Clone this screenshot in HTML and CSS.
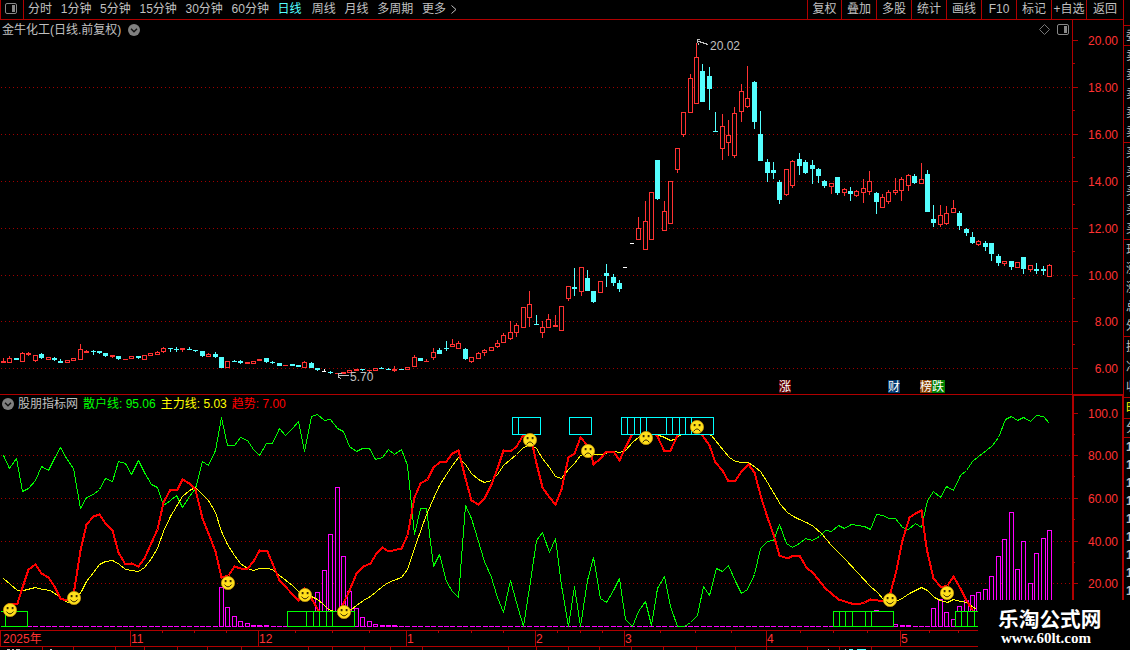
FILE: index.html
```html
<!doctype html>
<html lang="zh">
  <head>
    <meta charset="utf-8">
    <title>金牛化工</title>
    <link rel="stylesheet" href="styles.css">
  </head>
  <body>
    <div class="screen">
      <div class="main">
        <div class="toolbar">
          <div class="layout-btn">
            <svg width="12" height="11" viewBox="0 0 12 11"><rect x=".5" y=".5" width="11" height="10" rx="1.5" fill="none" stroke="#888"/><rect x="7" y="2" width="3" height="7" fill="#888"/></svg>
          </div>
          <div class="periods">
            <span>分时</span><span>1分钟</span><span>5分钟</span><span>15分钟</span><span>30分钟</span><span>60分钟</span><span class="active">日线</span><span>周线</span><span>月线</span><span>多周期</span><span class="more">更多<svg width="6" height="9" viewBox="0 0 6 9"><path d="M.5 .5L5 4.5L.5 8.5" fill="none" stroke="#c0c0c0"/></svg></span>
          </div>
          <div class="tools">
            <span>复权</span><span>叠加</span><span>多股</span><span>统计</span><span>画线</span><span>F10</span><span>标记</span><span>+自选</span><span>返回</span>
          </div>
        </div>

        <div class="panel price">
          <svg id="price" class="chart" width="1123" height="375" viewBox="0 20 1123 375"></svg>
          <div class="caption">
            <span>金牛化工(日线.前复权)</span>
            <svg class="fold" width="12" height="12" viewBox="0 0 12 12"><circle cx="6" cy="6" r="6" fill="#808080"/><path d="M3 4.8L6 7.8L9 4.8" fill="none" stroke="#111" stroke-width="1.4"/></svg>
            <div class="caption-right">
              <svg width="11" height="11" viewBox="0 0 11 11"><path d="M5.5 .5L10.5 5.5L5.5 10.5L.5 5.5Z" fill="none" stroke="#777"/></svg>
              <svg width="12" height="11" viewBox="0 0 12 11"><rect x=".5" y=".5" width="11" height="10" rx="1.5" fill="none" stroke="#888"/><rect x="7" y="2" width="3" height="7" fill="#888"/></svg>
            </div>
          </div>
        </div>

        <div class="panel indicator">
          <svg id="indicator" class="chart" width="1123" height="235" viewBox="0 395 1123 235"></svg>
          <div class="legend">
            <svg class="fold" width="12" height="12" viewBox="0 0 12 12"><circle cx="6" cy="6" r="6" fill="#808080"/><path d="M3 4.8L6 7.8L9 4.8" fill="none" stroke="#111" stroke-width="1.4"/></svg>
            <span class="name">股朋指标网</span>
            <span class="retail">散户线: 95.06</span>
            <span class="major">主力线: 5.03</span>
            <span class="trend">趋势: 7.00</span>
          </div>
        </div>

        <svg id="timeline" class="chart" width="1123" height="20" viewBox="0 630 1123 20"></svg>
      </div>

      <div class="quotes">
        <div class="block b0"></div>
        <div class="block b1"><i>委</i></div>
        <div class="block b2"><i>卖</i><i>卖</i><i>卖</i><i>卖</i><i>卖</i></div>
        <div class="block b2"><i>买</i><i>买</i><i>买</i><i>买</i><i>买</i></div>
        <div class="block b2"><i>现</i><i>涨</i><i>涨</i><i>总</i><i>外</i></div>
        <div class="block b3"><i>换</i><i>净</i><i>收</i></div>
        <div class="block b4 hot"><i>时</i></div>
        <div class="block b5"><i>分</i></div>
        <div class="block b6"><i>1</i><i>1</i><i>1</i><i>1</i><i>1</i><i>1</i><i>1</i><i>1</i><i>1</i></div>
      </div>

      <div class="watermark">
        <div class="site">乐淘公式网</div>
        <div class="url">www.60lt.com</div>
      </div>
    </div>
    <script src="chart.js"></script>
  </body>
</html>
```
FILE: styles.css
```css
* {
  box-sizing: border-box;
}
body {
  margin: 0;
  background: #000;
  color: #c0c0c0;
  font: 12px/14px "Liberation Sans", "Noto Sans CJK SC", sans-serif;
}
.screen {
  position: relative;
  display: flex;
  width: 1130px;
  height: 650px;
  overflow: hidden;
}
.main {
  display: flex;
  flex-direction: column;
  width: 1123px;
  flex: none;
}

/* toolbar */
.toolbar {
  display: flex;
  height: 20px;
  border-bottom: 1px solid #b00000;
  line-height: 19px;
  white-space: nowrap;
}
.layout-btn {
  display: flex;
  width: 24px;
  padding: 3px 0 0 4px;
  border-left: 1px solid #b00000;
  border-right: 1px solid #b00000;
}
.periods {
  display: flex;
  flex: 1;
  gap: 8.7px;
  padding-left: 4px;
}
.active {
  margin-right: 1.5px;
  color: #54ffff;
}
.more {
  display: flex;
  align-items: center;
  gap: 5px;
}
.tools {
  display: flex;
}
.tools span {
  width: 35px;
  border-left: 1px solid #b00000;
  text-align: center;
}
.tools span:first-child {
  width: 34px;
}
.tools span:last-child {
  width: 37px;
}

/* panels: the caption shares the grid cell with its chart */
.panel {
  display: grid;
  align-items: start;
}
.panel > * {
  grid-area: 1 / 1;
}
.chart {
  display: block;
  shape-rendering: crispEdges;
}
.chart text {
  font-size: 12px;
  fill: #ff3232;
}
.chart .note {
  fill: #c0c0c0;
}
.chart .tag {
  fill: #fff;
}
.caption {
  display: flex;
  align-items: center;
  width: 1072px;
  height: 19px;
  padding: 0 3px 0 2px;
}
.caption .fold {
  margin-left: 7px;
}
.caption-right {
  display: flex;
  gap: 7px;
  margin-left: auto;
}
.legend {
  display: flex;
  align-items: center;
  height: 17px;
  padding-left: 2px;
}
.name {
  margin: 0 5px 0 4px;
}
.retail {
  color: #0f0;
  margin-right: 5px;
}
.major {
  color: #ff0;
  margin-right: 5px;
}
.trend {
  color: #f00;
}

/* quote list, cut by the window edge */
.quotes {
  width: 7px;
  height: 600px;
  overflow: hidden;
  border-left: 1px solid #b00000;
}
.block {
  display: flex;
  flex-direction: column;
  justify-content: space-around;
  overflow: hidden;
  padding-left: 2px;
  border-bottom: 1px solid #b00000;
}
.block i {
  width: 14px;
  font-style: normal;
}
.b0 { height: 26px; }
.b1 { height: 20px; }
.b2 { height: 97px; }
.b3 { height: 61px; }
.b4 { height: 21px; }
.b5 { height: 19px; }
.b6 {
  height: 162px;
  border: 0;
  font-weight: bold;
}
.hot {
  color: #ff0;
}

.watermark {
  position: absolute;
  left: 978px;
  top: 600px;
  width: 152px;
  height: 50px;
  padding: 7px 0 0 20px;
  background: #000;
  color: #fff;
}
.site {
  font: bold 20.7px/23px "Noto Sans CJK SC", sans-serif;
}
.url {
  padding-left: 3px;
  font: bold 15px/17px "Liberation Serif", serif;
}
```
FILE: chart.js
```js
var NS = 'http://www.w3.org/2000/svg';
var RED = '#ff3232', CYAN = '#54ffff', LINE = '#b00000', DOT = '#a00000';

function add(svg, name, attrs, text) {
  var el = document.createElementNS(NS, name);
  for (var k in attrs) el.setAttribute(k, attrs[k]);
  if (text) el.textContent = text;
  svg.appendChild(el);
  return el;
}
function block(svg, x, y, w, h, fill) {
  add(svg, 'rect', { x: x, y: y, width: w, height: h, fill: fill });
}
function frame(svg, x, y, w, h, stroke) {
  add(svg, 'rect', { x: x + 0.5, y: y + 0.5, width: w - 1, height: h - 1, fill: '#000', stroke: stroke });
}
function label(svg, x, y, text, cls, anchor) {
  add(svg, 'text', { x: x, y: y, 'class': cls || '', 'text-anchor': anchor || 'start' }, text);
}
function grid(svg, y) {
  add(svg, 'path', { d: 'M1 ' + (y + 0.5) + 'H1072', stroke: DOT, 'stroke-dasharray': '1 3' });
}
function curve(svg, points, color, width) {
  add(svg, 'polyline', { points: points, fill: 'none', stroke: color, 'stroke-width': width,
    'stroke-linejoin': 'round', transform: 'translate(.5 .5)' });
}

// ---- price ----
// x, high, body top, body bottom, low, kind (r up, c down, w flat)
var candles = `3 358 361 363 363 r|9 356 358 363 363 r|16 358 358 360 360 c|22 352 353 362 362 r|28 352 353 355 356 r|35 355 355 361 362 r
41 353 354 358 359 c|48 357 357 360 360 r|54 357 358 360 361 c|60 359 361 363 363 c|67 360 360 363 363 r|73 358 358 361 361 r
80 344 349 360 360 r|86 350 351 353 353 r|93 350 351 352 355 c|99 351 351 353 354 c|105 353 353 356 357 c|112 355 355 357 358 r
118 356 356 359 360 c|125 359 359 360 360 r|131 356 356 359 359 r|138 356 356 358 359 c|144 355 355 360 360 r|150 353 353 356 356 r
157 351 352 355 355 r|163 347 348 352 353 r|170 348 348 349 352 c|176 347 349 350 352 c|182 348 348 350 352 r|189 347 349 350 350 c
195 350 350 351 352 c|202 351 351 356 357 c|208 353 354 357 357 r|215 352 354 357 358 c|221 357 357 368 368 c|227 361 361 368 368 r
234 360 361 362 362 c|240 360 361 363 364 c|247 362 362 364 364 r|253 361 361 364 364 r|259 359 359 361 361 r|266 358 358 362 363 c
272 361 362 363 364 c|279 363 363 366 366 c|285 365 365 366 366 r|292 364 364 366 366 c|298 365 365 367 367 c|304 361 362 368 368 r
311 362 363 368 368 c|317 368 368 370 371 c|324 369 371 372 372 w|330 371 372 373 374 c|337 373 373 374 374 r|343 372 372 374 374 r
349 370 370 373 373 r|356 369 369 371 371 r|362 369 369 370 371 c|369 370 370 371 373 r|375 368 368 371 371 r|381 367 368 369 369 c
388 368 369 370 370 c|394 366 369 371 372 r|401 369 369 370 370 c|407 367 367 370 370 r|414 355 357 367 367 r|420 358 358 361 361 c
426 359 361 362 362 r|433 348 352 358 360 r|439 348 350 354 354 c|446 341 348 349 351 c|452 339 344 347 347 r|458 341 343 349 349 r
465 348 349 359 360 c|471 357 357 362 363 r|478 352 353 359 359 r|484 349 350 353 356 r|491 347 347 351 351 r|497 340 343 347 348 r
503 333 335 343 343 r|510 321 332 339 340 r|516 323 325 333 337 r|523 307 307 328 328 r|529 291 304 318 327 r|536 315 324 325 325 c
542 321 327 333 338 r|548 314 319 328 328 r|555 315 325 327 327 r|561 306 306 331 331 r|568 286 286 299 301 r|574 268 287 289 296 c
581 267 267 292 296 r|587 270 278 291 291 c|593 291 291 302 303 c|600 281 281 293 293 r|606 264 273 276 287 c|613 274 277 283 286 c
619 280 283 289 292 c|625 267 267 268 268 w|632 243 243 244 244 w|638 217 228 240 240 r|645 201 221 250 250 r|651 192 192 240 240 r
657 160 160 199 200 c|664 201 211 231 231 r|670 181 181 224 224 r|677 148 148 170 173 r|683 112 112 135 137 r|690 74 78 113 113 r
696 43 57 104 104 r|702 64 71 102 102 c|709 67 76 89 110 c|715 112 131 132 132 c|722 114 126 149 160 r|728 120 135 143 156 r
734 107 113 156 158 r|741 84 91 112 122 r|747 66 98 107 108 r|754 81 82 122 129 c|760 111 134 161 161 c|767 159 162 173 182 c
773 162 170 173 179 c|779 180 182 200 204 c|786 169 169 195 196 r|792 160 161 186 188 r|799 153 159 166 175 c|805 160 162 173 174 c
812 160 165 169 184 c|818 168 169 176 183 c|824 180 181 186 188 c|831 183 183 187 194 r|837 177 177 193 195 c|844 188 189 193 196 r
850 187 191 194 201 c|856 190 191 196 197 r|863 179 188 193 203 r|869 171 181 192 195 r|876 192 193 202 214 c|882 194 197 208 208 r
888 190 192 202 204 r|895 178 190 193 195 r|901 177 179 191 201 r|908 174 175 186 191 r|914 174 176 183 184 c|921 163 179 184 184 r
927 170 174 212 212 c|933 205 219 223 227 c|940 205 215 225 227 r|946 206 213 224 225 r|953 200 208 213 213 r|959 211 213 226 230 c
966 228 229 233 236 c|972 232 237 243 244 c|978 240 241 245 246 r|985 241 243 247 251 c|991 243 243 254 261 c|998 254 256 263 266 c
1004 261 261 264 266 r|1011 261 261 267 270 c|1017 262 262 268 268 r|1023 257 257 269 274 c|1030 265 265 270 272 r
1036 263 269 271 274 c|1043 266 269 271 275 c|1049 264 265 277 277 r`;

var price = document.getElementById('price');
[87, 134, 181, 228, 275, 321, 368].forEach(function (y) { grid(price, y); });

candles.split(/[|\n]/).forEach(function (row) {
  var c = row.trim().split(' ');
  var x = +c[0], high = +c[1], top = +c[2], bottom = +c[3], low = +c[4];
  var color = { r: RED, c: CYAN, w: '#fff' }[c[5]];
  block(price, x, high, 1, low - high, color);
  if (c[5] == 'w') block(price, x - 2, top, 4, bottom - top, color);
  else if (c[5] == 'r' && bottom - top > 2) frame(price, x - 2, top, 5, bottom - top, color);
  else block(price, x - 2, top, 5, bottom - top, color);
});

// highest and lowest marks
add(price, 'path', { d: 'M700 39.5H697V43M697.5 41L708 44.5M698 43L699 45', fill: 'none', stroke: '#c0c0c0' });
label(price, 710, 50, '20.02', 'note');
add(price, 'path', { d: 'M349 375.5H337.5M341.5 373.5H338V378M338 376L341 379', fill: 'none', stroke: '#c0c0c0' });
label(price, 350, 381, '5.70', 'note');

[[779, '涨', '#600000'], [888, '财', '#003870'], [920, '榜', '#884000'], [932, '跌', '#008000']].forEach(function (t) {
  block(price, t[0], 380, t[0] == 932 ? 13 : 12, 13, t[2]);
  label(price, t[0], 391, t[1], 'tag');
});

block(price, 0, 394, 1123, 1, LINE);
block(price, 1072, 20, 1, 374, LINE);
[40, 87, 134, 181, 228, 275, 321, 368].forEach(function (y, i) {
  block(price, 1073, y, 5, 1, LINE);
  if (i < 7) block(price, 1073, y + 23, 2, 1, LINE);
  label(price, 1118, y + 5, (20 - i * 2) + '.00', '', 'end');
});

// ---- indicator ----
var retail = '3,455 9,468 16,458 22,491 28,488 35,480 41,466 48,470 54,458 60,447 66,458 73,468 80,508 86,497 93,494 99,489 105,478 112,481 118,461 125,463 131,474 138,460 144,472 151,484 157,487 163,505 170,500 176,495 182,507 189,496 195,488 202,461 208,465 215,450 221,417 227,445 234,445 240,437 247,440 253,449 259,455 266,443 272,443 279,428 285,435 292,428 298,421 304,451 311,416 317,414 324,420 330,419 337,428 343,431 349,446 356,451 362,448 369,448 375,459 382,457 388,449 394,454 401,449 407,465 414,534 420,508 426,508 433,566 439,554 446,581 452,591 458,597 465,505 471,518 478,541 484,561 491,577 497,597 503,612 510,580 516,602 523,626 530,581 536,540 542,532 549,552 555,538 561,585 568,626 574,586 580,626 587,580 593,557 600,598 606,602 613,590 619,578 625,619 632,626 638,611 645,601 651,625 657,588 664,576 670,606 677,626 684,626 690,622 697,615 703,586 709,595 716,568 722,571 728,565 735,581 741,593 747,589 754,574 760,548 767,541 773,540 779,524 786,543 792,547 799,543 805,538 812,540 819,536 825,530 831,531 838,525 844,528 851,524 857,525 864,526 870,529 876,514 882,515 889,518 895,518 902,527 908,529 915,523 921,527 927,500 933,491 940,497 946,486 953,490 960,475 966,470 972,461 978,456 986,450 992,445 998,437 1005,419 1011,416 1017,420 1023,417 1030,421 1036,415 1043,416 1049,423';
var major = '3,578 17,590 23,590 35,587 42,589 50,590 60,597 67,602 74,601 81,591 86,581 93,572 99,564 105,561 112,560 119,564 125,569 131,570 138,571 144,567 151,558 157,548 163,531 170,516 176,506 182,496 189,490 195,487 202,494 208,500 215,512 221,531 227,544 234,555 240,563 247,568 253,570 259,568 266,568 272,569 279,575 292,585 298,591 304,595 311,596 317,599 322,603 328,609 337,612 344,612 351,609 356,605 363,600 370,596 382,586 388,582 401,577 407,569 414,548 422,525 427,512 433,498 439,485 446,474 452,465 458,457 465,464 471,473 478,479 484,482 491,480 497,474 503,465 516,454 522,448 529,444 536,448 542,458 549,467 555,476 561,478 568,469 574,463 580,455 587,452 595,454 602,454 608,452 613,451 619,452 625,450 632,442 639,436 650,433 662,436 670,440 674,439 679,435 695,428 711,435 723,450 729,457 735,461 741,462 748,462 755,467 760,471 767,482 773,492 780,504 787,512 793,516 799,519 806,522 813,526 821,533 831,545 844,558 857,572 870,586 877,592 883,599 890,601 898,600 903,597 909,593 915,590 921,587 927,590 934,597 940,600 947,602 953,599 960,601 966,602 976,609';
var trend = '7,603 17,603 22,587 28,569 35,564 41,573 48,577 54,586 60,598 66,600 72,599 74,588 80,550 86,524 93,516 99,514 105,523 112,530 118,552 125,564 131,563 138,566 144,558 151,542 157,529 163,502 170,489 177,489 182,479 189,483 195,489 202,518 208,533 215,551 221,577 228,575 234,566 240,568 247,568 253,561 259,550 267,551 272,563 279,580 298,600 304,588 311,598 318,610 330,620 342,605 349,590 356,573 363,566 370,563 376,553 382,547 388,551 401,548 407,535 414,497 420,483 427,479 433,467 439,462 446,461 452,453 458,450 465,478 471,500 478,504 484,498 491,484 497,468 503,450 510,451 516,446 522,436 529,430 536,463 542,487 549,497 555,504 561,489 568,457 574,453 580,437 587,445 591,455 593,464 600,458 606,451 613,451 619,460 625,447 631,435 645,425 657,436 664,451 670,450 677,435 690,425 702,435 709,445 715,462 722,470 728,481 735,480 741,471 748,464 754,472 761,498 767,517 773,534 779,555 787,558 793,555 799,555 806,567 813,573 825,588 831,593 838,599 851,603 857,604 864,602 870,599 877,600 886,600 890,592 896,570 902,540 909,517 915,513 921,510 925,540 927,552 933,578 941,587 947,585 953,576 960,588 966,600 973,611';
// bar centre, top
var bars = [[221, 587], [227, 607], [234, 616], [240, 621], [247, 623], [253, 625], [259, 625], [266, 625],
  [317, 592], [324, 570], [330, 534], [337, 487], [343, 556], [349, 591], [356, 608], [362, 617], [369, 621], [375, 624],
  [382, 625], [388, 625], [394, 625], [876, 610], [895, 624], [902, 625], [908, 625], [933, 608], [940, 599], [946, 612],
  [953, 619], [959, 606], [966, 600], [972, 595], [978, 592], [985, 589], [991, 576], [998, 556], [1004, 539],
  [1011, 512], [1017, 569], [1023, 541], [1030, 583], [1036, 553], [1043, 538], [1049, 530]];

var ind = document.getElementById('indicator');
[455, 498, 541, 583].forEach(function (y) { grid(ind, y); });

for (var i = 0; i < 154; i++) block(ind, Math.floor(3.5 + i * 6.42) - 2, 626, 5, 1, '#f0f');
curve(ind, retail, '#0f0', 1);
bars.forEach(function (b) {
  if (b[1] > 624) block(ind, b[0] - 2, 625, 5, 2, '#f0f');
  else frame(ind, b[0] - 2, b[1], 5, 627 - b[1], '#f0f');
});
curve(ind, major, '#ff0', 1);
curve(ind, trend, '#f00', 2);

function zone(x1, x2, y, h, dividers, color) {
  frame(ind, x1, y, x2 - x1 + 1, h, color);
  dividers.forEach(function (x) { block(ind, x, y, 1, h, color); });
}
block(ind, 1, 611, 5, 1, '#0f0');
block(ind, 1, 626, 5, 1, '#0f0');
zone(5, 27, 611, 16, [], '#0f0');
zone(287, 354, 611, 16, [306, 313, 319, 326, 332], '#0f0');
zone(833, 893, 611, 16, [839, 845, 852, 865, 871], '#0f0');
zone(955, 990, 611, 16, [961, 967, 974], '#0f0');
zone(512, 540, 417, 18, [518], '#00ffff');
zone(569, 591, 417, 18, [], '#00ffff');
zone(621, 713, 417, 18, [627, 634, 640, 646, 666, 672, 679, 685, 691], '#00ffff');

function face(x, y, happy) {
  var g = add(ind, 'g', { transform: 'translate(' + x + ' ' + y + ')', 'shape-rendering': 'auto' });
  add(g, 'circle', { r: 6.6, fill: '#ffe01c', stroke: '#c8980c', 'stroke-width': 0.8 });
  add(g, 'rect', { x: -3.3, y: -3, width: 1.8, height: 2.2, fill: '#3a2800' });
  add(g, 'rect', { x: 1.7, y: -3, width: 1.8, height: 2.2, fill: '#3a2800' });
  add(g, 'path', { d: happy ? 'M-3.6 1.5Q0 6.3 3.6 1.5' : 'M-3.3 4.4Q0 -.6 3.3 4.4', fill: 'none', stroke: '#3a2800' });
}
[[10, 610], [74, 598], [228, 583], [305, 595], [344, 612], [890, 600], [947, 593]].forEach(function (p) { face(p[0], p[1], true); });
[[530, 440], [588, 451], [646, 438], [697, 427]].forEach(function (p) { face(p[0], p[1], false); });

block(ind, 1072, 395, 2, 235, LINE);
block(ind, 1072, 395, 51, 1, LINE);
block(ind, 1122, 395, 1, 235, LINE);
[413, 455, 498, 541, 583].forEach(function (y, i) {
  block(ind, 1074, y, 4, 1, LINE);
  if (i < 4) block(ind, 1074, y + 21, 1, 1, LINE);
  label(ind, 1118, y + 5, i ? (100 - i * 20) + '.00' : '100.0', '', 'end');
});

// ---- timeline ----
var time = document.getElementById('timeline');
block(time, 0, 630, 1072, 1, LINE);
block(time, 0, 646, 1072, 1, LINE);
[[0, '2025年'], [130, '11'], [258, '12'], [406, '1'], [535, '2'], [624, '3'], [766, '4'], [900, '5']].forEach(function (m) {
  block(time, m[0], 630, 1, 17, LINE);
  label(time, m[0] + (m[0] ? 1 : 3), 643, m[1]);
});
[162, 194, 226, 295, 332, 369, 438, 471, 503, 557, 580, 602, 660, 695, 731, 800, 833, 867, 929, 958].forEach(function (x) {
  block(time, x, 631, 1, 2, LINE);
});
[42, 73, 115, 144, 177, 207, 241, 308, 332, 364, 390, 422, 508, 536, 568, 599, 631, 663, 696, 735, 766, 807, 839, 871].forEach(function (x) {
  block(time, x, 647, 1, 3, LINE);
});
[[7, 3], [12, 2], [16, 4], [50, 2], [828, 1], [845, 1]].forEach(function (s) { block(time, s[0], 649, s[1], 1, '#c0c0c0'); });
[[849, 4], [857, 9]].forEach(function (s) { block(time, s[0], 649, s[1], 1, CYAN); });
```
